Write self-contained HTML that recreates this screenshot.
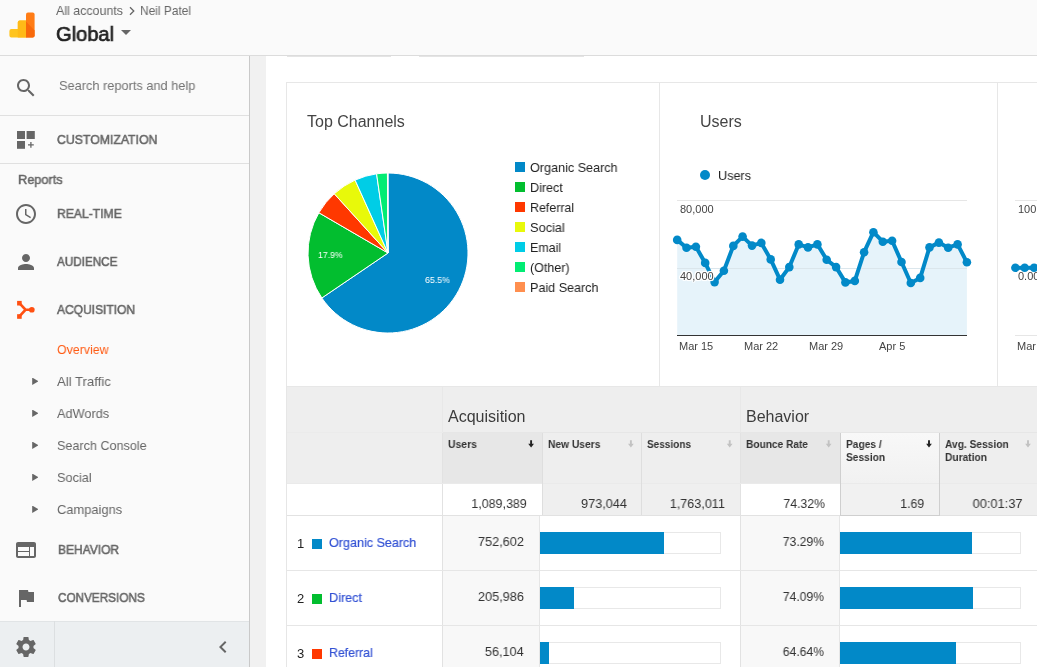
<!DOCTYPE html>
<html>
<head>
<meta charset="utf-8">
<title>Analytics</title>
<style>
html,body{margin:0;padding:0;}
body{-webkit-font-smoothing:antialiased;}
.t,.nav,.sub,.leg,.ax,.hd,.num,.lnk{will-change:transform;}
body{width:1037px;height:667px;overflow:hidden;position:relative;background:#fff;font-family:"Liberation Sans",sans-serif;color:#222;}
.abs{position:absolute;}
.t{position:absolute;white-space:nowrap;line-height:1;}
#header{position:absolute;left:0;top:0;width:1037px;height:55px;background:#fafafa;border-bottom:1px solid #dcdcdc;}
#side{position:absolute;left:0;top:56px;width:249px;height:611px;background:#fafafa;border-right:1px solid #c9c9c9;}
#strip{position:absolute;left:250px;top:56px;width:16px;height:611px;background:#f1f1f1;}
.sep{position:absolute;left:0;width:249px;height:1px;background:#e0e0e0;}
.nav{position:absolute;left:57.3px;font-size:13px;color:#666;white-space:nowrap;line-height:1;-webkit-text-stroke:0.55px #666;}
.sub{position:absolute;left:56.5px;font-size:13.5px;color:#666;white-space:nowrap;line-height:1;}
.tri{position:absolute;left:32.2px;width:6.3px;height:7.4px;background:#666;clip-path:polygon(0 0,100% 50%,0 100%);}
#bottom{position:absolute;left:0;top:621px;width:249px;height:46px;background:#eceff1;}
.leg{position:absolute;left:530px;font-size:13px;color:#222;white-space:nowrap;line-height:1;}
.lsq{position:absolute;left:515px;width:10px;height:10px;}
.ax{position:absolute;font-size:11px;color:#444;white-space:nowrap;line-height:1;}
.hd{position:absolute;font-size:11px;font-weight:bold;color:#333;white-space:nowrap;line-height:13px;}
.num{position:absolute;font-size:13px;color:#333;white-space:nowrap;line-height:1;text-align:right;}
.lnk{position:absolute;font-size:13px;color:#3352d4;-webkit-text-stroke:0.2px #3352d4;white-space:nowrap;line-height:1;}
.bar{position:absolute;height:22px;background:#0289c8;}
.barbox{position:absolute;height:22px;border:1px solid #e8e8e8;box-sizing:border-box;background:#fff;}
</style>
</head>
<body>

<!-- HEADER -->
<div id="header">
  <svg class="abs" style="left:8px;top:11px" width="28" height="28" viewBox="0 0 28 28">
    <path d="M1.400 19.900 a2 2 0 0 1 2-2 h6.400 v-6.300 a2 2 0 0 1 2-2 h6.400 v17 h-14.800 a2 2 0 0 1 -2-2 z" fill="#ffc41e"/>
    <path d="M9.800 17.900 v-6.300 a2 2 0 0 1 2-2 h6.400 v17 h-8.400 z" fill="#ffba17"/>
    <path d="M18 3.400 a2 2 0 0 1 2-2 h4.600 a2 2 0 0 1 2 2 v21.200 a2 2 0 0 1 -2 2 h-6.600 z" fill="#ff7c15"/>
    <path d="M18 10.400 L26.600 19.500 v5.100 a2 2 0 0 1 -2 2 h-6.600 z" fill="#f8690b"/>
  </svg>
  <div class="t" style="transform:scaleX(0.9559);transform-origin:0 50%;left:56px;top:4px;font-size:13px;color:#666;">All accounts</div>
  <div class="t" style="transform:scaleX(0.9166);transform-origin:0 50%;left:140px;top:4px;font-size:13px;color:#666;">Neil Patel</div>
  <svg class="abs" style="left:128px;top:6px" width="8" height="10" viewBox="0 0 8 10"><path d="M2 1.2 L5.8 5 L2 8.8" fill="none" stroke="#666" stroke-width="1.3"/></svg>
  <div class="t" style="transform:scaleX(0.9786);transform-origin:0 50%;left:56px;top:23.5px;font-size:20.5px;color:#222;-webkit-text-stroke:0.7px #222;">Global</div>
  <div class="abs" style="left:121px;top:30px;width:0;height:0;border-top:5px solid #666;border-left:5px solid transparent;border-right:5px solid transparent;"></div>
</div>

<!-- SIDEBAR -->
<div id="side">
  <svg class="abs" style="left:14px;top:19.5px" width="24" height="24" viewBox="0 0 24 24"><path fill="#666" d="M15.5 14h-.79l-.28-.27C15.41 12.59 16 11.11 16 9.5 16 5.91 13.09 3 9.5 3S3 5.91 3 9.5 5.91 16 9.5 16c1.61 0 3.09-.59 4.23-1.57l.27.28v.79l5 4.99L20.49 19l-4.99-5zm-6 0C7.01 14 5 11.990 5 9.500S7.010 5 9.500 5 14 7.010 14 9.500 11.990 14 9.500 14z"/></svg>
  <div class="t" style="transform:scaleX(0.9466);transform-origin:0 50%;left:59.4px;top:23px;font-size:13.5px;color:#737373;">Search reports and help</div>
  <div class="sep" style="top:59px"></div>
  <!-- customization icon -->
  <svg class="abs" style="left:17px;top:75px" width="20" height="20" viewBox="0 0 20 20"><rect x="0" y="0" width="8" height="8" fill="#666"/><rect x="9.600" y="0" width="8.200" height="8" fill="#666"/><rect x="0" y="10" width="8" height="7.800" fill="#666"/><path d="M13.900 11 v5.800 M11 13.900 h5.800" stroke="#666" stroke-width="1.300"/></svg>
  <div class="nav" style="transform:scaleX(0.9436);transform-origin:0 50%;top:77px">CUSTOMIZATION</div>
  <div class="sep" style="top:107px"></div>
  <div class="t" style="transform:scaleX(0.9817);transform-origin:0 50%;left:17.9px;top:117px;font-size:13px;color:#666;-webkit-text-stroke:0.5px #666;">Reports</div>

  <!-- realtime -->
  <svg class="abs" style="left:14px;top:146px" width="24" height="24" viewBox="0 0 24 24"><path fill="#666" d="M11.990 2C6.470 2 2 6.480 2 12s4.470 10 9.990 10C17.520 22 22 17.520 22 12S17.520 2 11.990 2zM12 20c-4.420 0-8-3.580-8-8s3.580-8 8-8 8 3.580 8 8-3.580 8-8 8zm.500-13H11v6l5.250 3.150.750-1.230-4.500-2.670z"/></svg>
  <div class="nav" style="transform:scaleX(0.9345);transform-origin:0 50%;top:151px">REAL-TIME</div>
  <!-- audience -->
  <svg class="abs" style="left:14px;top:194px" width="24" height="24" viewBox="0 0 24 24"><path fill="#666" d="M12 12c2.210 0 4-1.790 4-4s-1.790-4-4-4-4 1.790-4 4 1.790 4 4 4zm0 2c-2.670 0-8 1.340-8 4v2h16v-2c0-2.660-5.330-4-8-4z"/></svg>
  <div class="nav" style="transform:scaleX(0.9005);transform-origin:0 50%;top:199px">AUDIENCE</div>
  <!-- acquisition -->
  <svg class="abs" style="left:14px;top:242px" width="24" height="24" viewBox="0 0 24 24"><path d="M5.400 5.200 L11.600 11.750 L5.400 18.400 M11 11.750 H17.800" fill="none" stroke="#ff5012" stroke-width="2.6"/><rect x="3.100" y="2.900" width="4.600" height="4.600" fill="#ff5012"/><rect x="3.100" y="16.200" width="4.600" height="4.600" fill="#ff5012"/><circle cx="17.800" cy="11.750" r="2.850" fill="#ff5012"/></svg>
  <div class="nav" style="transform:scaleX(0.9241);transform-origin:0 50%;top:247px">ACQUISITION</div>

  <div class="sub" style="transform:scaleX(0.9171);transform-origin:0 50%;left:57.4px;top:287px;color:#ff5a12;">Overview</div>
  <div class="tri" style="top:321.600px"></div><div class="sub" style="transform:scaleX(0.9735);transform-origin:0 50%;top:319px">All Traffic</div>
  <div class="tri" style="top:353.600px"></div><div class="sub" style="transform:scaleX(0.9443);transform-origin:0 50%;top:351px">AdWords</div>
  <div class="tri" style="top:385.600px"></div><div class="sub" style="transform:scaleX(0.9338);transform-origin:0 50%;top:383px">Search Console</div>
  <div class="tri" style="top:417.600px"></div><div class="sub" style="transform:scaleX(0.9434);transform-origin:0 50%;top:415px">Social</div>
  <div class="tri" style="top:449.600px"></div><div class="sub" style="transform:scaleX(0.9547);transform-origin:0 50%;top:447px">Campaigns</div>

  <!-- behavior -->
  <svg class="abs" style="left:14px;top:482px" width="24" height="24" viewBox="0 0 24 24"><path fill="#666" d="M20 4H4c-1.100 0-1.990.900-1.990 2L2 18c0 1.100.900 2 2 2h16c1.100 0 2-.900 2-2V6c0-1.100-.900-2-2-2zm-5 14H4v-4h11v4zm0-5H4V9h11v4zm5 5h-4V9h4v9z"/></svg>
  <div class="nav" style="transform:scaleX(0.9227);transform-origin:0 50%;left:57.9px;top:487px">BEHAVIOR</div>
  <!-- conversions -->
  <svg class="abs" style="left:14px;top:530px" width="24" height="24" viewBox="0 0 24 24"><path fill="#666" d="M14.400 6L14 4H5v17h2v-7h5.600l.400 2h7V6z"/></svg>
  <div class="nav" style="transform:scaleX(0.9024);transform-origin:0 50%;left:57.9px;top:535px">CONVERSIONS</div>
</div>
<div id="bottom">
  <div class="abs" style="left:0;top:0;width:249px;height:1px;background:#e1e4e6;"></div>
  <div class="abs" style="left:54px;top:0;width:1px;height:46px;background:#dcdfe1;"></div>
  <svg class="abs" style="left:14px;top:14px" width="24" height="24" viewBox="0 0 24 24"><path fill="#666" d="M19.430 12.980c.040-.320.070-.640.070-.980s-.030-.660-.070-.980l2.110-1.650c.190-.150.240-.420.120-.640l-2-3.460c-.120-.220-.390-.300-.610-.220l-2.490 1c-.520-.400-1.080-.730-1.690-.980l-.380-2.650C14.460 2.180 14.250 2 14 2h-4c-.250 0-.460.180-.490.420l-.380 2.650c-.610.250-1.170.590-1.690.980l-2.490-1c-.230-.090-.490 0-.610.220l-2 3.460c-.130.220-.070.490.120.640l2.110 1.650c-.040.320-.070.650-.070.980s.030.660.070.980l-2.110 1.650c-.190.150-.240.420-.120.640l2 3.460c.120.220.390.300.610.220l2.490-1c.520.400 1.080.730 1.690.980l.380 2.650c.030.240.240.420.490.420h4c.250 0 .460-.180.490-.420l.380-2.650c.610-.250 1.170-.590 1.690-.980l2.490 1c.230.090.490 0 .610-.220l2-3.460c.120-.220.070-.490-.120-.640l-2.110-1.650zM12 15.500c-1.930 0-3.500-1.570-3.500-3.500s1.570-3.500 3.500-3.500 3.500 1.570 3.500 3.500-1.570 3.500-3.500 3.500z"/></svg>
  <svg class="abs" style="left:211px;top:14px" width="24" height="24" viewBox="0 0 24 24"><path fill="#666" d="M15.410 7.410L14 6l-6 6 6 6 1.410-1.410L10.830 12z"/></svg>
</div>
<div id="strip"></div>

<!-- tabs remnants -->
<div class="abs" style="left:287px;top:56px;width:104px;height:1px;background:#e4e4e4;"></div>
<div class="abs" style="left:419px;top:56px;width:165px;height:1px;background:#e4e4e4;"></div>

<!-- PANEL -->
<div class="abs" style="left:286px;top:82px;width:760px;height:305px;border:1px solid #e7e7e7;box-sizing:border-box;"></div>
<div class="abs" style="left:659px;top:82px;width:1px;height:305px;background:#e7e7e7;"></div>
<div class="abs" style="left:997px;top:82px;width:1px;height:305px;background:#e7e7e7;"></div>

<div class="t" style="transform:scaleX(0.9975);transform-origin:0 50%;left:307px;top:114px;font-size:16px;color:#444;">Top Channels</div>
<div class="t" style="transform:scaleX(0.9885);transform-origin:0 50%;left:700px;top:114px;font-size:16px;color:#444;">Users</div>

<svg class="abs" style="left:0;top:0" width="1037" height="667" viewBox="0 0 1037 667">
  <path d="M388,253 L388.00,173.00 A80,80 0 1 1 321.83,297.97 Z" fill="#0289c8" stroke="#fff" stroke-width="1"/><path d="M388,253 L321.83,297.97 A80,80 0 0 1 318.86,212.76 Z" fill="#02be2f" stroke="#fff" stroke-width="1"/><path d="M388,253 L318.86,212.76 A80,80 0 0 1 334.26,193.74 Z" fill="#ff3800" stroke="#fff" stroke-width="1"/><path d="M388,253 L334.26,193.74 A80,80 0 0 1 355.08,180.09 Z" fill="#e8f90a" stroke="#fff" stroke-width="1"/><path d="M388,253 L355.08,180.09 A80,80 0 0 1 376.59,173.82 Z" fill="#00cde6" stroke="#fff" stroke-width="1"/><path d="M388,253 L376.59,173.82 A80,80 0 0 1 387.44,173.00 Z" fill="#02ec74" stroke="#fff" stroke-width="1"/><path d="M388,253 L387.44,173.00 A80,80 0 0 1 388.00,173.00 Z" fill="#ff8f4f" stroke="#fff" stroke-width="1"/>
  <!-- users chart -->
  <line x1="677" x2="967" y1="200.500" y2="200.500" stroke="#e6e6e6" stroke-width="1"/>
  <polygon points="677.2,335.5 677.2,239.9 686.5,247.7 695.9,246.8 705.2,262.9 714.6,282.1 723.9,270.7 733.3,245.9 742.6,236.6 752.0,245.6 761.3,242.9 770.7,259.4 780.0,279.7 789.3,267.1 798.7,244.4 808.0,247.4 817.4,244.4 826.7,259.7 836.1,267.1 845.4,282.4 854.8,280.9 864.1,252.2 873.4,232.2 882.8,241.7 892.1,240.8 901.5,262.0 910.8,283.0 920.2,277.9 929.5,247.4 938.9,242.6 948.2,247.7 957.6,244.4 966.9,262.3 966.9,335.5" fill="#e6f3fa"/>
  <line x1="677" x2="967" y1="268.500" y2="268.500" stroke="#dbe6ec" stroke-width="1"/>
  <line x1="677" x2="967" y1="335.500" y2="335.500" stroke="#333" stroke-width="1.2"/>
  <polyline points="677.2,239.9 686.5,247.7 695.9,246.8 705.2,262.9 714.6,282.1 723.9,270.7 733.3,245.9 742.6,236.6 752.0,245.6 761.3,242.9 770.7,259.4 780.0,279.7 789.3,267.1 798.7,244.4 808.0,247.4 817.4,244.4 826.7,259.7 836.1,267.1 845.4,282.4 854.8,280.9 864.1,252.2 873.4,232.2 882.8,241.7 892.1,240.8 901.5,262.0 910.8,283.0 920.2,277.9 929.5,247.4 938.9,242.6 948.2,247.7 957.6,244.4 966.9,262.3" fill="none" stroke="#0289c8" stroke-width="4" stroke-linejoin="round"/>
  <g fill="#0289c8"><circle cx="677.2" cy="239.9" r="4.3"/><circle cx="686.5" cy="247.7" r="4.3"/><circle cx="695.9" cy="246.8" r="4.3"/><circle cx="705.2" cy="262.9" r="4.3"/><circle cx="714.6" cy="282.1" r="4.3"/><circle cx="723.9" cy="270.7" r="4.3"/><circle cx="733.3" cy="245.9" r="4.3"/><circle cx="742.6" cy="236.6" r="4.3"/><circle cx="752.0" cy="245.6" r="4.3"/><circle cx="761.3" cy="242.9" r="4.3"/><circle cx="770.7" cy="259.4" r="4.3"/><circle cx="780.0" cy="279.7" r="4.3"/><circle cx="789.3" cy="267.1" r="4.3"/><circle cx="798.7" cy="244.4" r="4.3"/><circle cx="808.0" cy="247.4" r="4.3"/><circle cx="817.4" cy="244.4" r="4.3"/><circle cx="826.7" cy="259.7" r="4.3"/><circle cx="836.1" cy="267.1" r="4.3"/><circle cx="845.4" cy="282.4" r="4.3"/><circle cx="854.8" cy="280.9" r="4.3"/><circle cx="864.1" cy="252.2" r="4.3"/><circle cx="873.4" cy="232.2" r="4.3"/><circle cx="882.8" cy="241.7" r="4.3"/><circle cx="892.1" cy="240.8" r="4.3"/><circle cx="901.5" cy="262.0" r="4.3"/><circle cx="910.8" cy="283.0" r="4.3"/><circle cx="920.2" cy="277.9" r="4.3"/><circle cx="929.5" cy="247.4" r="4.3"/><circle cx="938.9" cy="242.6" r="4.3"/><circle cx="948.2" cy="247.7" r="4.3"/><circle cx="957.6" cy="244.4" r="4.3"/><circle cx="966.9" cy="262.3" r="4.3"/></g>
  <circle cx="705" cy="175" r="5" fill="#0289c8"/>
  <!-- third chart -->
  <line x1="1015" x2="1037" y1="200.500" y2="200.500" stroke="#e6e6e6" stroke-width="1"/>
  <line x1="1015" x2="1037" y1="335.500" y2="335.500" stroke="#e6e6e6" stroke-width="1"/>
  <line x1="1015.4" x2="1037" y1="267.800" y2="267.800" stroke="#0289c8" stroke-width="4"/>
  <g fill="#0289c8"><circle cx="1015.400" cy="267.800" r="4.300"/><circle cx="1024.700" cy="267.800" r="4.300"/><circle cx="1034.100" cy="267.800" r="4.300"/></g>
</svg>

<div class="t" style="transform:scaleX(0.9674);transform-origin:0 50%;left:318.2px;top:250.500px;font-size:9px;color:#fff;">17.9%</div>
<div class="t" style="transform:scaleX(0.9753);transform-origin:0 50%;left:425.3px;top:276px;font-size:9px;color:#fff;">65.5%</div>

<!-- legend -->
<div class="lsq" style="top:162px;background:#0289c8"></div><div class="leg" style="transform:scaleX(0.9698);transform-origin:0 50%;top:161px">Organic Search</div>
<div class="lsq" style="top:182px;background:#02be2f"></div><div class="leg" style="transform:scaleX(0.9690);transform-origin:0 50%;top:181px">Direct</div>
<div class="lsq" style="top:202px;background:#ff3800"></div><div class="leg" style="transform:scaleX(0.9557);transform-origin:0 50%;top:201px">Referral</div>
<div class="lsq" style="top:222px;background:#e8f90a"></div><div class="leg" style="transform:scaleX(0.9824);transform-origin:0 50%;top:221px">Social</div>
<div class="lsq" style="top:242px;background:#00cde6"></div><div class="leg" style="transform:scaleX(0.9565);transform-origin:0 50%;top:241px">Email</div>
<div class="lsq" style="top:262px;background:#02ec74"></div><div class="leg" style="transform:scaleX(0.9618);transform-origin:0 50%;top:261px">(Other)</div>
<div class="lsq" style="top:282px;background:#ff8f4f"></div><div class="leg" style="transform:scaleX(0.9671);transform-origin:0 50%;top:281px">Paid Search</div>

<div class="t" style="transform:scaleX(0.9719);transform-origin:0 50%;left:718px;top:169px;font-size:13px;color:#222;">Users</div>
<div class="ax" style="left:680px;top:204px;">80,000</div>
<div class="ax" style="left:680px;top:271px;text-shadow:1px 0 0 #fff,-1px 0 0 #fff,0 1px 0 #fff,0 -1px 0 #fff,1px 1px 0 #fff,-1px -1px 0 #fff,1px -1px 0 #fff,-1px 1px 0 #fff,0 0 2px #fff,0 0 3px #fff;">40,000</div>
<div class="ax" style="left:679px;top:341px;">Mar 15</div>
<div class="ax" style="left:744px;top:341px;">Mar 22</div>
<div class="ax" style="left:809px;top:341px;">Mar 29</div>
<div class="ax" style="left:879px;top:341px;">Apr 5</div>
<div class="ax" style="left:1018px;top:204px;">100</div>
<div class="ax" style="left:1018px;top:271px;">0.00</div>
<div class="ax" style="left:1017px;top:341px;">Mar</div>

<!-- TABLE -->
<div class="abs" style="left:287px;top:387px;width:750px;height:97px;background:#eeeeee;"></div>
<div class="abs" style="left:443px;top:433px;width:99px;height:51px;background:#e7e7e7;"></div>
<div class="abs" style="left:741px;top:433px;width:99px;height:51px;background:#e7e7e7;"></div>
<div class="abs" style="left:841px;top:433px;width:98px;height:51px;background:linear-gradient(#f8f8f8,#f1f1f1);"></div>
<!-- totals row -->
<div class="abs" style="left:287px;top:484px;width:750px;height:31px;background:#efefef;"></div>
<div class="abs" style="left:287px;top:484px;width:255px;height:31px;background:#fff;"></div>
<div class="abs" style="left:741px;top:484px;width:99px;height:31px;background:#fff;"></div>
<div class="abs" style="left:841px;top:484px;width:98px;height:31px;background:#f1f1f1;"></div>
<!-- data col bgs -->
<div class="abs" style="left:443px;top:516px;width:97px;height:151px;background:#f8f8f8;"></div>
<div class="abs" style="left:741px;top:516px;width:99px;height:151px;background:#f8f8f8;"></div>

<!-- lines -->
<div class="abs" style="left:286px;top:386px;width:1px;height:281px;background:#e6e6e6;"></div>
<div class="abs" style="left:442px;top:387px;width:1px;height:46px;background:#e8e8e8;"></div><div class="abs" style="left:442px;top:433px;width:1px;height:234px;background:#e2e2e2;"></div>
<div class="abs" style="left:740px;top:387px;width:1px;height:46px;background:#e8e8e8;"></div><div class="abs" style="left:740px;top:433px;width:1px;height:234px;background:#e2e2e2;"></div>
<div class="abs" style="left:443px;top:432px;width:594px;height:1px;background:#e6e6e6;"></div>
<div class="abs" style="left:287px;top:432px;width:156px;height:1px;background:#ebebeb;"></div>
<div class="abs" style="left:287px;top:483px;width:750px;height:1px;background:#eaeaea;"></div>
<div class="abs" style="left:287px;top:515px;width:750px;height:1px;background:#e2e2e2;"></div>
<div class="abs" style="left:287px;top:570px;width:750px;height:1px;background:#e6e6e6;"></div>
<div class="abs" style="left:287px;top:625px;width:750px;height:1px;background:#e6e6e6;"></div>
<div class="abs" style="left:542px;top:433px;width:1px;height:82px;background:#dedede;"></div>
<div class="abs" style="left:641px;top:433px;width:1px;height:82px;background:#dedede;"></div>
<div class="abs" style="left:840px;top:433px;width:1px;height:82px;background:#cfcfcf;"></div>
<div class="abs" style="left:939px;top:433px;width:1px;height:82px;background:#cfcfcf;"></div>
<div class="abs" style="left:840px;top:515px;width:100px;height:1px;background:#cfcfcf;"></div>
<div class="abs" style="left:539px;top:516px;width:1px;height:151px;background:#e6e6e6;"></div>
<div class="abs" style="left:839px;top:516px;width:1px;height:151px;background:#e6e6e6;"></div>

<div class="t" style="transform:scaleX(1.0016);transform-origin:0 50%;left:448px;top:408.5px;font-size:16px;color:#3c3c3c;">Acquisition</div>
<div class="t" style="transform:scaleX(0.9959);transform-origin:0 50%;left:746px;top:408.5px;font-size:16px;color:#3c3c3c;">Behavior</div>

<div class="hd" style="transform:scaleX(0.9451);transform-origin:0 50%;left:448px;top:438px;">Users</div>
<div class="hd" style="transform:scaleX(0.9313);transform-origin:0 50%;left:548px;top:438px;">New Users</div>
<div class="hd" style="transform:scaleX(0.9107);transform-origin:0 50%;left:647px;top:438px;">Sessions</div>
<div class="hd" style="transform:scaleX(0.9219);transform-origin:0 50%;left:746px;top:438px;">Bounce Rate</div>
<div class="hd" style="transform:scaleX(0.9268);transform-origin:0 50%;left:846px;top:438px;">Pages /<br>Session</div>
<div class="hd" style="transform:scaleX(0.9276);transform-origin:0 50%;left:945px;top:438px;">Avg. Session<br>Duration</div>

<svg class="abs" style="left:0;top:0" width="1037" height="667" viewBox="0 0 1037 667">
  <g id="arrows">
    <path d="M530.15 440.2 h1.9 v3.6 h1.95 l-2.9 3.6 l-2.9 -3.6 h1.950 z" fill="#222"/>
    <path d="M629.95 440.2 h1.9 v3.6 h1.95 l-2.9 3.6 l-2.9 -3.6 h1.950 z" fill="#c2c2c2"/>
    <path d="M728.75 440.2 h1.9 v3.6 h1.95 l-2.9 3.6 l-2.9 -3.6 h1.950 z" fill="#c2c2c2"/>
    <path d="M827.75 440.2 h1.9 v3.6 h1.95 l-2.9 3.6 l-2.9 -3.6 h1.950 z" fill="#c2c2c2"/>
    <path d="M928.05 440.2 h1.9 v3.6 h1.95 l-2.9 3.6 l-2.9 -3.6 h1.950 z" fill="#222"/>
    <path d="M1027.05 440.2 h1.9 v3.6 h1.95 l-2.9 3.6 l-2.9 -3.6 h1.950 z" fill="#c2c2c2"/>
  </g>
</svg>

<div class="num" style="transform:scaleX(0.9595);transform-origin:100% 50%;right:510px;top:497px;">1,089,389</div>
<div class="num" style="transform:scaleX(0.9787);transform-origin:100% 50%;right:410px;top:497px;">973,044</div>
<div class="num" style="transform:scaleX(0.9688);transform-origin:100% 50%;right:312px;top:497px;">1,763,011</div>
<div class="num" style="transform:scaleX(0.9457);transform-origin:100% 50%;right:212px;top:497px;">74.32%</div>
<div class="num" style="transform:scaleX(0.9521);transform-origin:100% 50%;right:113px;top:497px;">1.69</div>
<div class="num" style="transform:scaleX(0.9880);transform-origin:100% 50%;right:14px;top:497px;">00:01:37</div>

<!-- rows -->
<div class="num" style="left:297px;top:537px;color:#222;">1</div>
<div class="abs" style="left:312px;top:539px;width:10px;height:10px;background:#0289c8;"></div>
<div class="lnk" style="transform:scaleX(0.9665);transform-origin:0 50%;left:329px;top:536px;">Organic Search</div>
<div class="num" style="transform:scaleX(0.9809);transform-origin:100% 50%;right:513px;top:535px;">752,602</div>
<div class="barbox" style="left:540px;top:532px;width:181px;"></div><div class="bar" style="left:540px;top:532px;width:124px;"></div>
<div class="num" style="transform:scaleX(0.9366);transform-origin:100% 50%;right:213px;top:535px;">73.29%</div>
<div class="barbox" style="left:840px;top:532px;width:181px;"></div><div class="bar" style="left:840px;top:532px;width:132px;"></div>

<div class="num" style="left:297px;top:592px;color:#222;">2</div>
<div class="abs" style="left:312px;top:594px;width:10px;height:10px;background:#02be2f;"></div>
<div class="lnk" style="transform:scaleX(0.9749);transform-origin:0 50%;left:329px;top:591px;">Direct</div>
<div class="num" style="transform:scaleX(0.9809);transform-origin:100% 50%;right:513px;top:590px;">205,986</div>
<div class="barbox" style="left:540px;top:587px;width:181px;"></div><div class="bar" style="left:540px;top:587px;width:34px;"></div>
<div class="num" style="transform:scaleX(0.9366);transform-origin:100% 50%;right:213px;top:590px;">74.09%</div>
<div class="barbox" style="left:840px;top:587px;width:181px;"></div><div class="bar" style="left:840px;top:587px;width:133px;"></div>

<div class="num" style="left:297px;top:647px;color:#222;">3</div>
<div class="abs" style="left:312px;top:649px;width:10px;height:10px;background:#ff3800;"></div>
<div class="lnk" style="transform:scaleX(0.9470);transform-origin:0 50%;left:329px;top:646px;">Referral</div>
<div class="num" style="transform:scaleX(0.9782);transform-origin:100% 50%;right:513px;top:645px;">56,104</div>
<div class="barbox" style="left:540px;top:642px;width:181px;"></div><div class="bar" style="left:540px;top:642px;width:9px;"></div>
<div class="num" style="transform:scaleX(0.9366);transform-origin:100% 50%;right:213px;top:645px;">64.64%</div>
<div class="barbox" style="left:840px;top:642px;width:181px;"></div><div class="bar" style="left:840px;top:642px;width:116px;"></div>

</body>
</html>
